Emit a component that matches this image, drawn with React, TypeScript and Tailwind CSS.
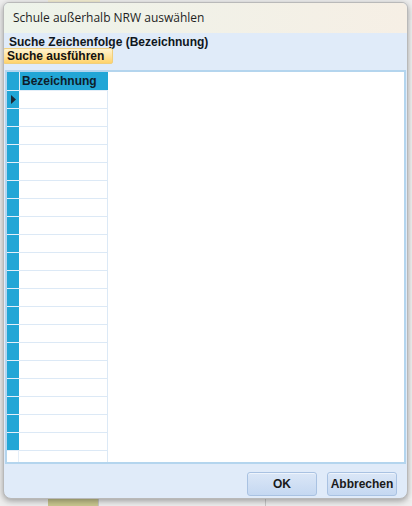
const rows = Array.from({ length: 20 }, (_, i) => i);

function GridRow({ current }: { current?: boolean }) {
  return (
    <div className="flex h-[18px] shrink-0">
      <div className="w-[12px] h-full bg-[#22a6d6] border-b border-[#e4eef8] flex items-center justify-center">
        {current && (
          <svg width="5" height="9" viewBox="0 0 5 9">
            <path d="M0 0 L5 4.5 L0 9 Z" fill="#1d2a36" />
          </svg>
        )}
      </div>
      <div className="w-[89px] h-full bg-white border-b border-r border-[#dce9f6]" />
    </div>
  );
}

function DialogButton({ label }: { label: string }) {
  return (
    <button className="w-[70px] h-[24px] rounded-[3px] border border-[#a9c2e2] bg-gradient-to-b from-[#dbe7f7] to-[#c5d8f1] text-[12px] font-bold text-[#1a1a1a] shadow-[inset_0_1px_0_#eef4fc]">
      {label}
    </button>
  );
}

export default function App() {
  return (
    <div className="relative w-[412px] h-[506px] overflow-hidden bg-[#eeeeee] font-['Liberation_Sans',Arial,sans-serif]">
      {/* application behind the dialog */}
      <div className="absolute left-[48px] top-0 w-[52px] h-[4px] bg-[#f4eed2]" />
      <div className="absolute left-[48px] bottom-0 w-[50px] h-[8px] bg-[#c9c78f]" />
      <div className="absolute left-[98px] bottom-0 w-px h-[8px] bg-[#c8c8c8]" />
      <div className="absolute left-[265px] bottom-0 w-px h-[8px] bg-[#c8c8c8]" />
      <div className="absolute right-0 top-[20px] w-[4px] h-[480px] bg-[#f2f2f2]" />

      <div className="relative pl-[3px] pt-[2px]">
        <div className="w-[405px] h-[497px] flex flex-col rounded-t-[6px] rounded-b-[8px] border border-[#b9b9b9] bg-[#e0ebf9] shadow-[0_2px_6px_rgba(0,0,0,0.35)] overflow-hidden">
          {/* title bar */}
          <div className="h-[30px] shrink-0 flex items-center pl-[9px] bg-gradient-to-r from-[#edf3ea] to-[#f6efe5]">
            <span className="font-['Open_Sans',sans-serif] text-[12px] text-[#1f1f1f]">
              Schule außerhalb NRW auswählen
            </span>
          </div>

          {/* search */}
          <div className="h-[37px] shrink-0 flex flex-col">
            <div className="pl-[5px] pt-[2px] h-[14px] text-[12px] leading-[14px] font-bold text-[#0f1620]">
              Suche Zeichenfolge (Bezeichnung)
            </div>
            <button className="mt-[1px] ml-[-1px] w-[110px] h-[16px] rounded-[2px] border border-[#f0cf7e] bg-gradient-to-b from-[#fff3cf] to-[#ffd36a] text-left pl-[3px] text-[12px] leading-[14px] font-bold text-[#111]">
              Suche ausführen
            </button>
          </div>

          {/* grid */}
          <div className="flex-1 mx-[1px] border-2 border-[#b4d5ee] bg-white flex flex-col overflow-hidden">
            <div className="flex h-[19px] shrink-0">
              <div className="w-[12px] h-full bg-[#22a6d6] border-b border-[#e4eef8]" />
              <div className="w-[89px] h-full bg-[#22a6d6] border-l border-b border-[#e4eef8] pl-[2px] text-[12px] leading-[18px] font-bold text-[#0e1d2a]">
                Bezeichnung
              </div>
            </div>
            {rows.map((i) => (
              <GridRow key={i} current={i === 0} />
            ))}
            <div className="flex h-[18px] shrink-0">
              <div className="w-[12px] h-full bg-white border-r border-[#e4eef8]" />
              <div className="w-[89px] h-full bg-white border-r border-[#dce9f6]" />
            </div>
          </div>

          {/* footer */}
          <div className="h-[34px] shrink-0 flex items-start justify-end gap-[10px] pr-[10px] pt-[8px]">
            <DialogButton label="OK" />
            <DialogButton label="Abbrechen" />
          </div>
        </div>
      </div>
    </div>
  );
}
